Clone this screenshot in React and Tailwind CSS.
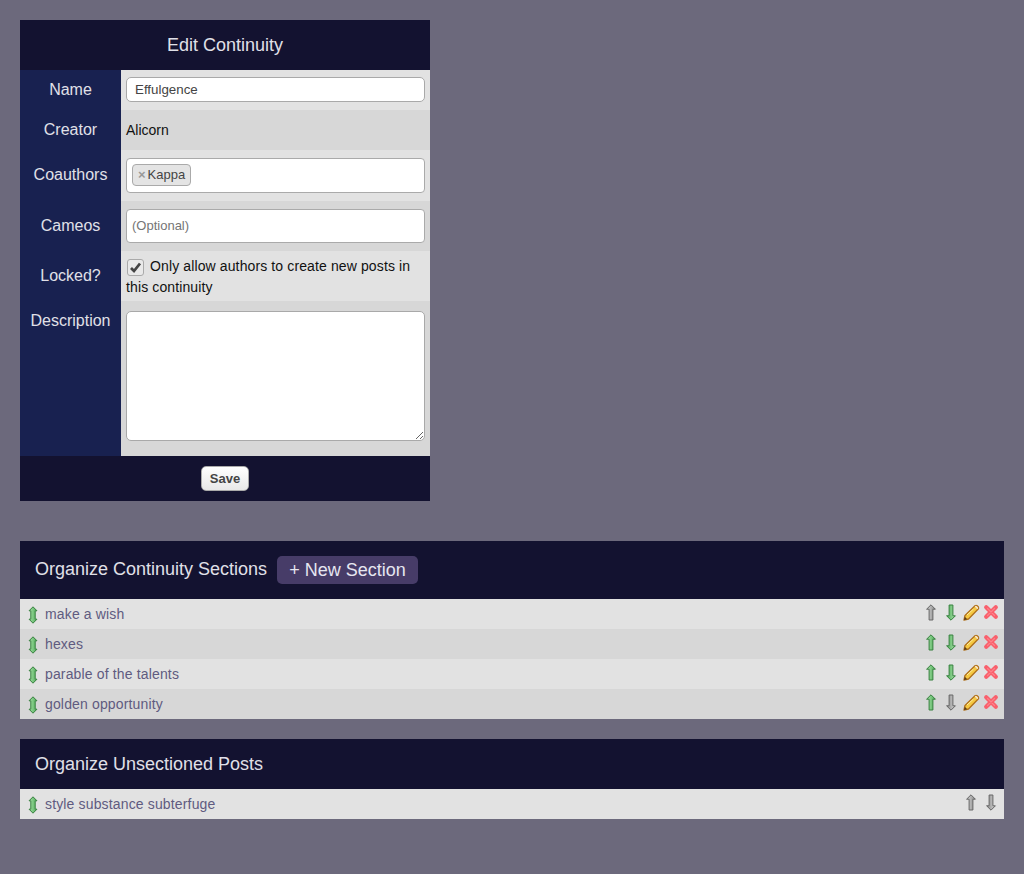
const Arrow = ({ dir = "up", gray = false }) => {
  const id = `arrow-${gray ? "gray" : "green"}`;
  const edge = gray ? "#666" : "#37803f";
  return (
    <svg width="12" height="17" viewBox="0 0 12 17">
      <defs>
        <linearGradient id={id} x1="0" x2="1" y1="0" y2="0">
          <stop offset="0" stopColor={gray ? "#d4d4d4" : "#a8e0a8"} />
          <stop offset="1" stopColor={gray ? "#8a8a8a" : "#4fae58"} />
        </linearGradient>
      </defs>
      <g transform={dir === "down" ? "rotate(180 6 8.5)" : undefined}>
        <path d="M6 .8 L10.4 5.2 L7.9 5.2 L7.9 16 L4.1 16 L4.1 5.2 L1.6 5.2 Z" fill={`url(#${id})`} stroke={edge} strokeWidth="1" strokeLinejoin="round" />
      </g>
    </svg>
  );
};

const DragIcon = () => (
  <svg width="12" height="18" viewBox="0 0 12 18" className="shrink-0">
    <defs>
      <linearGradient id="drag-fill" x1="0" x2="1" y1="0" y2="0">
        <stop offset="0" stopColor="#a8e0a8" />
        <stop offset="1" stopColor="#4fae58" />
      </linearGradient>
    </defs>
    <path d="M6 .8 L10 4.8 L8.2 4.8 L8.2 13.2 L10 13.2 L6 17.2 L2 13.2 L3.8 13.2 L3.8 4.8 L2 4.8 Z" fill="url(#drag-fill)" stroke="#37803f" strokeWidth="1" strokeLinejoin="round" />
  </svg>
);

const Pencil = () => (
  <svg width="17" height="17" viewBox="0 0 17 17" className="shrink-0">
    <path d="M1 16 L2 11.5 L12 1.8 Q13 1 14.2 1.8 L15.4 3 Q16 4 15.2 5 L5.5 15 Z" fill="#f5c842" stroke="#b0701a" strokeWidth="1.3" strokeLinejoin="round" />
    <path d="M11.7 2.6 L14.4 5.3 L15 4.6 Q15.4 4 15 3.4 L13.8 2.2 Q13 1.6 12.3 2.1 Z" fill="#f5e3cc" />
    <path d="M4 11 L10.5 5" stroke="#fdeea0" strokeWidth="1" />
    <path d="M1 16 L1.8 12.8 L4.2 15.2 Z" fill="#5c3d18" />
  </svg>
);

const Cross = () => (
  <svg width="16" height="16" viewBox="0 0 16 16">
    <path d="M3.2 3.2 L12.8 12.8 M12.8 3.2 L3.2 12.8" stroke="#f9606c" strokeWidth="4.2" strokeLinecap="round" />
    <path d="M4.5 4.5 L11.5 11.5 M11.5 4.5 L4.5 11.5" stroke="#ff808a" strokeWidth="1.2" strokeLinecap="round" />
  </svg>
);

const FormRow = ({ label, alt, h, top, children }) => (
  <div className={`flex ${h}`}>
    <div className={`w-[101px] shrink-0 bg-[#182150] text-center text-[16px] leading-[18px] text-[#e0e0e8] ${top}`}>{label}</div>
    <div className={`flex-1 px-[5px] ${alt ? "bg-[#d7d7d7]" : "bg-[#e2e2e2]"}`}>{children}</div>
  </div>
);

const PostRow = ({ title, alt, up = true, down = true, edit = true }) => (
  <div className={`flex h-[30px] items-center justify-between pl-[7px] pr-[5px] ${alt ? "bg-[#d7d7d7]" : "bg-[#e2e2e2]"}`}>
    <div className="flex items-center gap-[6px]">
      <div className="mt-[1px] flex"><DragIcon /></div>
      <span className="text-[14px] leading-[18px] tracking-[0.15px] text-[#5f5b80]">{title}</span>
    </div>
    <div className="-mt-[4px] flex items-center gap-[4px]">
      <div className="flex w-[16px] justify-center"><Arrow dir="up" gray={!up} /></div>
      <div className="flex w-[16px] justify-center"><Arrow dir="down" gray={!down} /></div>
      {edit && <div className="flex w-[16px] justify-center"><Pencil /></div>}
      {edit && <Cross />}
    </div>
  </div>
);

const App = () => {
  return (
    <div className="min-h-[874px] bg-[#6c697c] p-5 font-['Liberation_Sans',Arial,sans-serif]">
      <div className="w-[410px]">
        <div className="flex h-[50px] items-center justify-center bg-[#131230] text-[18px] text-[#e0e0e8]">Edit Continuity</div>
        <FormRow label="Name" h="h-[40px]" top="pt-[11px]">
          <input
            readOnly
            value="Effulgence"
            className="mt-[7px] block h-[25px] w-full rounded-[5px] border border-[#a9a9a9] bg-white px-[8px] text-[13.33px] text-[#444]"
          />
        </FormRow>
        <FormRow label="Creator" alt h="h-[40px]" top="pt-[11px]">
          <div className="pt-[12px] text-[14px] leading-[16px] text-[#111]">Alicorn</div>
        </FormRow>
        <FormRow label="Coauthors" h="h-[51px]" top="pt-[16px]">
          <div className="mt-[8px] flex h-[35px] items-center rounded-[4px] border border-[#aaa] bg-white pb-[2px] pl-[5px]">
            <span className="flex h-[22px] items-center rounded-[4px] border border-[#aaa] bg-[#e4e4e4] px-[5px] text-[13px] text-[#444]">
              <span className="mr-[2px] font-bold text-[#999]">×</span>Kappa
            </span>
          </div>
        </FormRow>
        <FormRow label="Cameos" alt h="h-[50px]" top="pt-[16px]">
          <div className="mt-[8px] flex h-[34px] items-center rounded-[4px] border border-[#aaa] bg-white pl-[5px] text-[13px] text-[#757575]">(Optional)</div>
        </FormRow>
        <FormRow label="Locked?" h="h-[50px]" top="pt-[16px]">
          <div className="pt-[3px] text-[14px] leading-[21px] tracking-[0.12px] text-[#111]">
            <span className="relative ml-[1px] mr-[2px] inline-block h-[17px] w-[17px] translate-y-[5px]">
              <input type="checkbox" readOnly checked className="block h-[17px] w-[17px] appearance-none rounded-[3px] border border-[#aaa] bg-[#e9e9e9]" />
              <svg width="13" height="13" viewBox="0 0 13 13" className="absolute left-[2px] top-[2px]">
                <path d="M2 7 L5 10 L11 2.5" fill="none" stroke="#444" strokeWidth="2.8" />
              </svg>
            </span>{" "}
            Only allow authors to create new posts in this continuity
          </div>
        </FormRow>
        <FormRow label="Description" alt h="h-[155px]" top="pt-[11px]">
          <textarea readOnly className="mt-[10px] block h-[130px] w-full rounded-[5px] border border-[#a9a9a9] bg-white" />
        </FormRow>
        <div className="flex h-[45px] items-center justify-center bg-[#131230]">
          <button className="h-[25px] w-[48px] rounded-[5px] border border-[#aaa] bg-gradient-to-b from-white to-[#e8e8e8] text-[13px] font-bold text-[#444]">Save</button>
        </div>
      </div>

      <div className="mt-[40px]">
        <div className="flex h-[58px] items-center gap-[10px] bg-[#131230] px-[15px]">
          <span className="-mt-[2px] text-[18px] text-[#e0e0e8]">Organize Continuity Sections</span>
          <span className="flex h-[28px] items-center rounded-[5px] bg-[#473c68] px-[12px] text-[18px] text-[#e6e6f0]">+ New Section</span>
        </div>
        <PostRow title="make a wish" up={false} />
        <PostRow title="hexes" alt />
        <PostRow title="parable of the talents" />
        <PostRow title="golden opportunity" alt down={false} />
      </div>

      <div className="mt-[20px]">
        <div className="flex h-[50px] items-center bg-[#131230] px-[15px] text-[18px] text-[#e0e0e8]">Organize Unsectioned Posts</div>
        <PostRow title="style substance subterfuge" up={false} down={false} edit={false} />
      </div>
    </div>
  );
};

export default App;
